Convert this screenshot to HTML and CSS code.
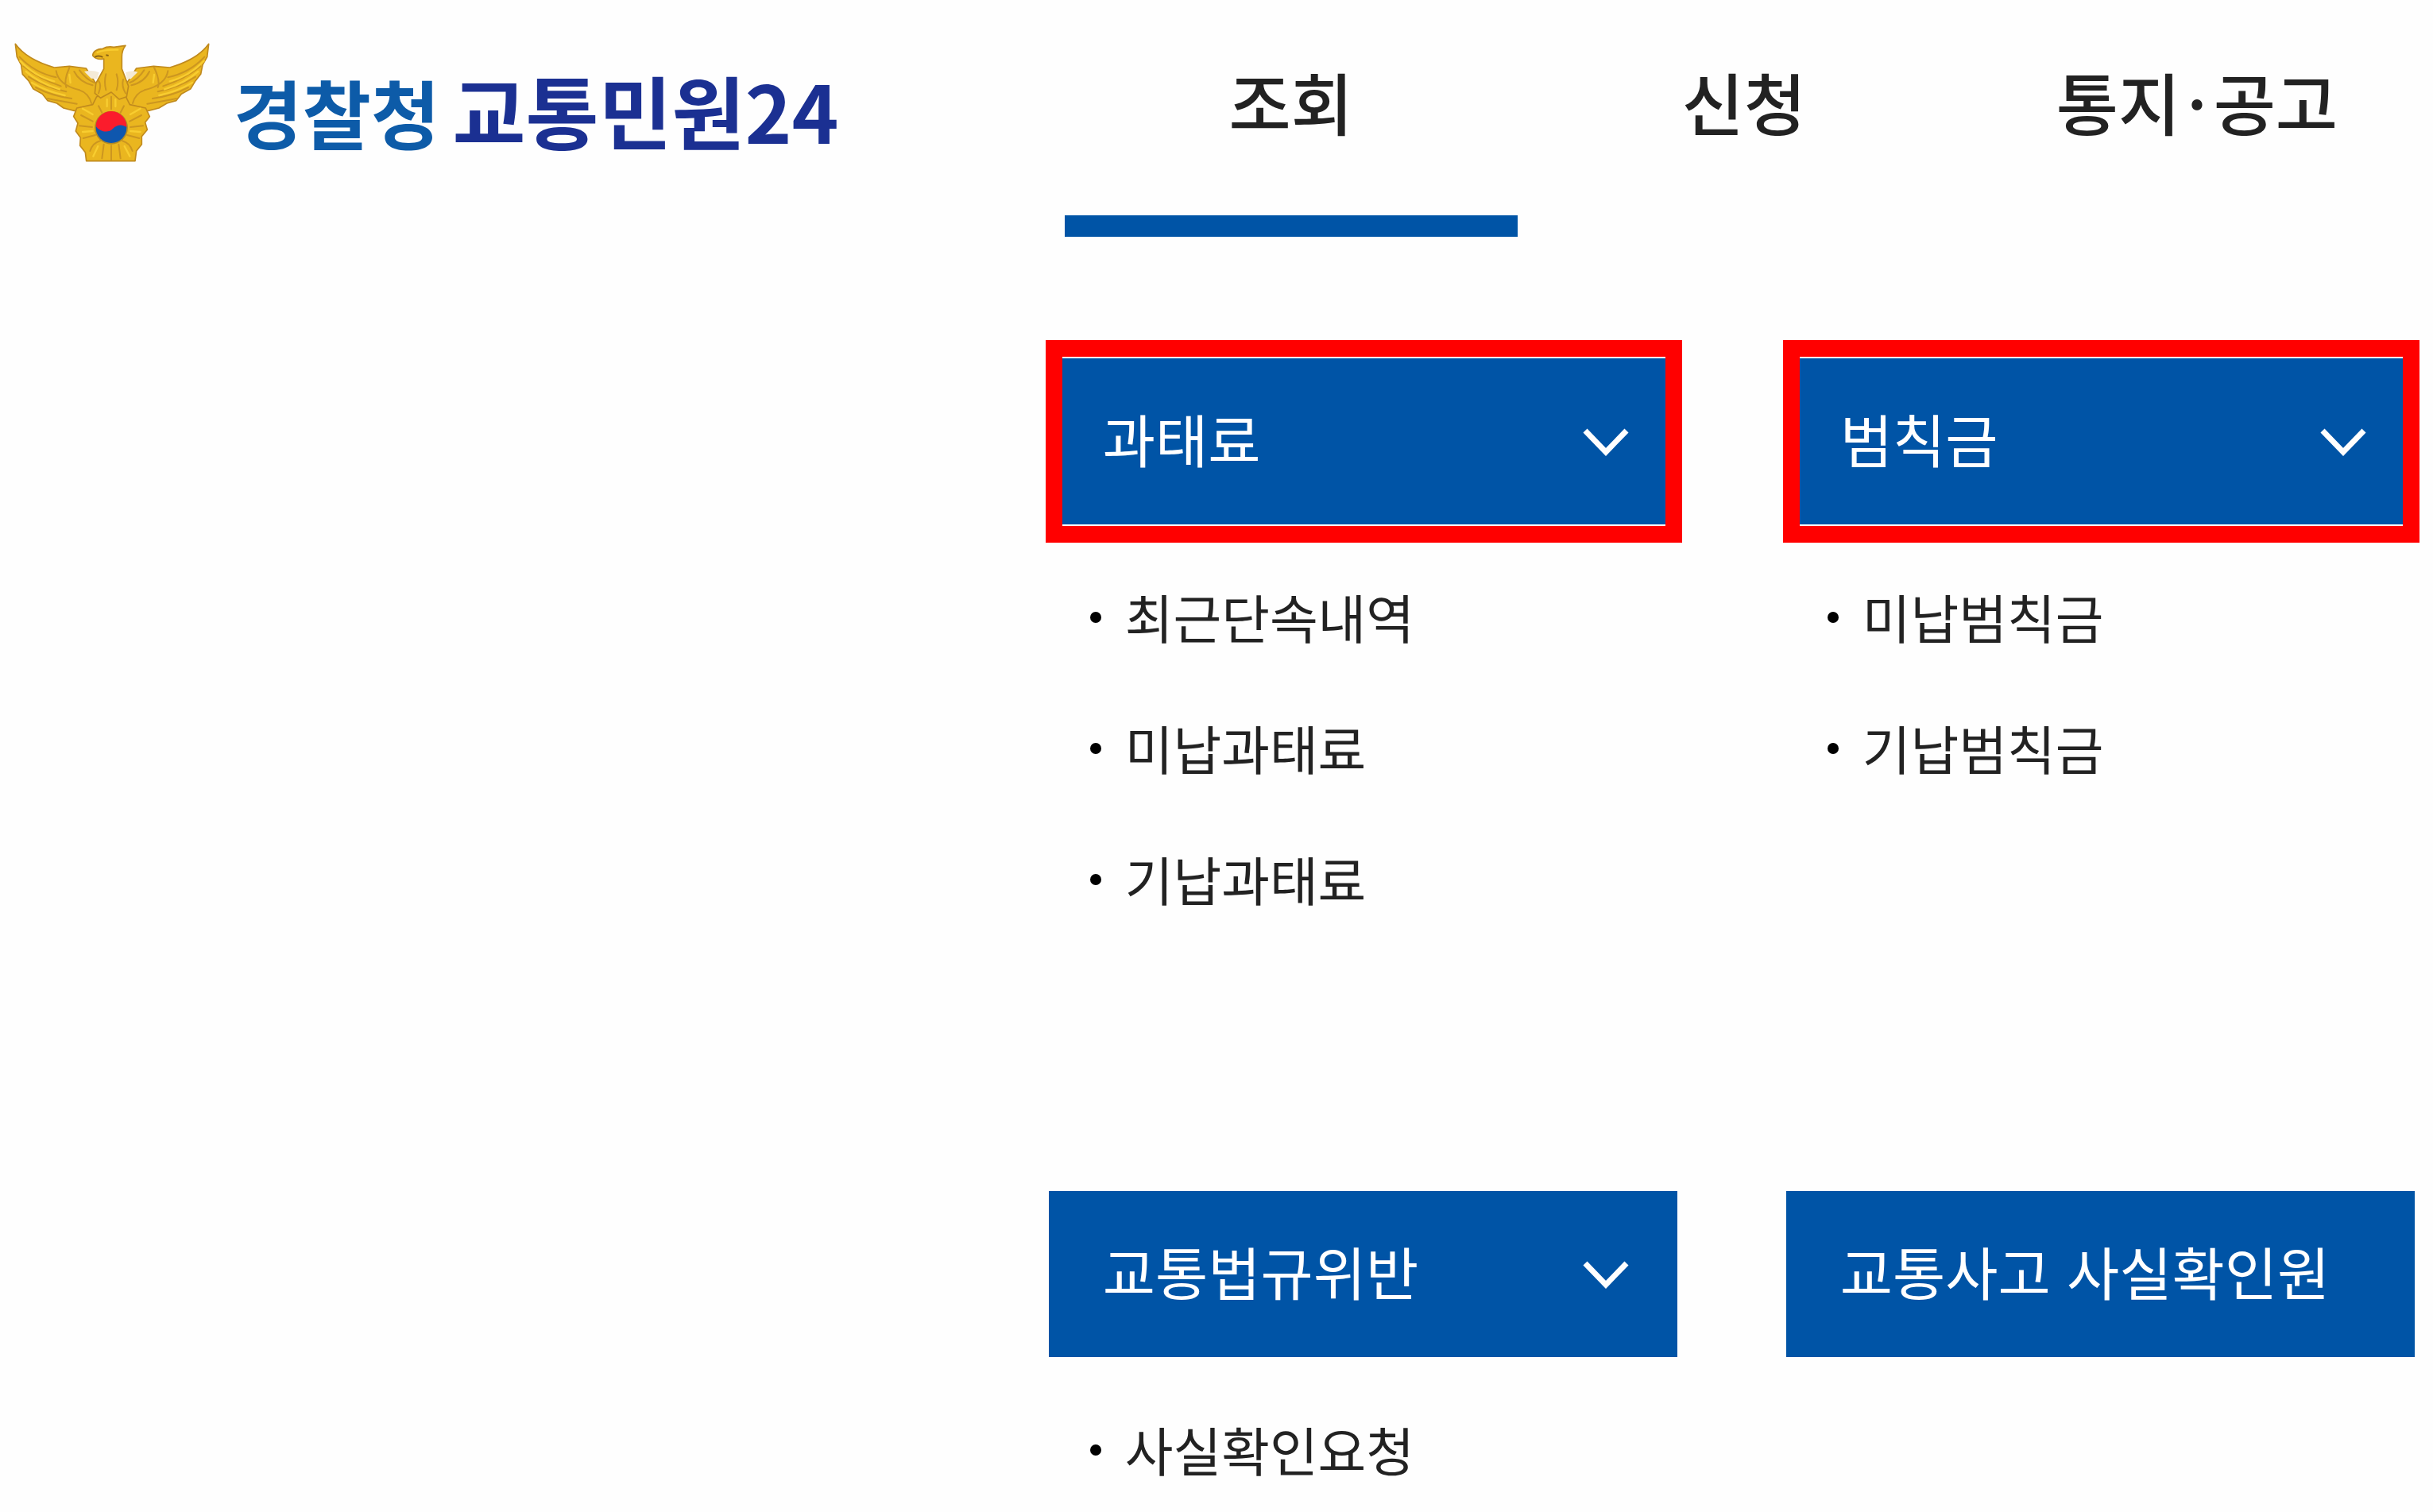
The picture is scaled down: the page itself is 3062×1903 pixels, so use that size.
FILE: index.html
```html
<!DOCTYPE html>
<html lang="ko">
<head>
  <meta charset="UTF-8">
  <meta name="viewport" content="width=device-width, initial-scale=1.0">
  <title>경찰청 교통민원24</title>
  <link rel="stylesheet" href="styles.css">
</head>
<body>

  <header class="header">
    <a class="logo" href="#">
      <!-- Police eagle emblem -->
      <svg class="emblem" viewBox="54 72 738 450" aria-hidden="true">
        <g fill="#eab61f" stroke="#c08a1e" stroke-width="5" stroke-linejoin="round">
          <path d="M58 76 Q100 135 205 165 L262 160 L325 168 L385 260 L350 325 L280 328 L240 318 L215 300 L180 290 L160 265 L125 245 L108 215 L85 190 L80 155 L64 125 Z"/>
          <path d="M788 76 Q746 135 641 165 L580 160 L515 168 L455 260 L490 325 L560 328 L600 318 L630 300 L665 290 L685 265 L720 245 L738 215 L758 190 L765 155 L782 125 Z"/>
          <path d="M290 318 L350 305 L365 275 L420 255 L475 275 L490 305 L550 318 L565 350 L548 372 L556 400 L535 425 L535 455 L515 480 L510 518 L326 518 L322 485 L302 460 L304 430 L286 405 L294 375 L278 350 Z"/>
          <path d="M392 170 L392 132 Q365 138 350 120 Q352 96 388 94 Q405 84 430 88 L474 82 Q460 100 460 125 L460 170 L485 235 L478 275 L450 285 L420 258 L380 280 L358 262 L362 225 Z"/>
        </g>
        <path d="M318 180 Q350 172 374 184 L366 208 L344 206 Z M474 184 Q495 174 520 182 L494 208 L480 208 Z" fill="#f4ead6"/>
        <!-- Feathers -->
        <g fill="none" stroke="#cc9620" stroke-width="6" stroke-linecap="round">
          <path d="M74 125 Q130 185 212 202 M88 160 Q150 210 230 235 M108 200 Q170 240 250 256 M135 240 Q190 270 270 282 M180 282 Q220 290 290 302 M212 178 Q220 230 300 250 M262 165 Q240 215 250 240 M280 180 Q300 220 350 232 M300 175 Q325 210 356 222 M300 250 Q335 262 345 300"/>
          <path d="M772 125 Q716 185 634 202 M758 160 Q696 210 616 235 M738 200 Q676 240 596 256 M711 240 Q656 270 576 282 M666 282 Q626 290 556 302 M634 178 Q626 230 546 250 M582 165 Q606 215 596 240 M564 180 Q546 220 496 232 M544 175 Q521 210 490 222 M546 250 Q511 262 501 300"/>
          <path d="M372 215 Q385 230 372 262 M400 190 Q392 220 400 250 M440 190 Q450 220 440 250 M465 210 Q458 235 474 262"/>
          <path d="M306 345 L350 368 M300 385 L348 390 M314 432 L360 420 M340 480 Q350 450 378 442 M385 508 L392 455 M420 514 L420 460 M455 508 L448 455 M500 480 Q490 450 462 442 M526 432 L480 420 M540 385 L492 390 M534 345 L490 368 M372 310 L385 335 M420 275 L420 322 M468 310 L455 335"/>
        </g>
        <g fill="none" stroke="#f8cd30" stroke-width="7" stroke-linecap="round">
          <path d="M76 140 Q130 198 205 217 M98 180 Q150 225 225 247 M120 222 Q175 255 245 270 M262 192 L266 222 M312 320 L350 342 M312 408 L350 405 M352 500 L370 462 M404 285 L404 312"/>
          <path d="M770 140 Q716 198 641 217 M748 180 Q696 225 621 247 M726 222 Q671 255 601 270 M582 192 L578 222 M530 320 L492 342 M530 408 L492 405 M490 500 L470 462 M436 285 L436 312"/>
          <path d="M368 108 Q395 96 445 98"/>
        </g>
        <path d="M358 125 Q375 118 388 126 M400 118 L410 120" fill="none" stroke="#8d6414" stroke-width="6"/>
        <!-- Taegeuk -->
        <circle cx="420" cy="392" r="63" fill="#b48b24"/>
        <circle cx="420" cy="392" r="58" fill="#0f57ae"/>
        <path d="M362 386 A58 58 0 0 1 478 390 C462 378 440 380 426 396 C410 414 376 408 362 386 Z" fill="#fb1c2c"/>
      </svg>
      <span class="logo-text">
        <span class="logo-police">경찰청</span>
        <span class="logo-service">교통민원24</span>
      </span>
    </a>

    <nav class="tabs">
      <a class="tab active" href="#">조회</a>
      <a class="tab" href="#">신청</a>
      <a class="tab" href="#">통지<span class="dot">·</span>공고</a>
    </nav>
  </header>

  <main class="menu">
    <section class="group">
      <button class="group-btn marked" type="button">
        과태료
        <svg class="chevron" viewBox="0 0 58 36" aria-hidden="true"><path d="M3 4 L29 31 L55 4"/></svg>
      </button>
      <ul class="links">
        <li><a href="#">최근단속내역</a></li>
        <li><a href="#">미납과태료</a></li>
        <li><a href="#">기납과태료</a></li>
      </ul>
    </section>

    <section class="group">
      <button class="group-btn marked" type="button">
        범칙금
        <svg class="chevron" viewBox="0 0 58 36" aria-hidden="true"><path d="M3 4 L29 31 L55 4"/></svg>
      </button>
      <ul class="links">
        <li><a href="#">미납범칙금</a></li>
        <li><a href="#">기납범칙금</a></li>
      </ul>
    </section>

    <section class="group">
      <button class="group-btn" type="button">
        교통법규위반
        <svg class="chevron" viewBox="0 0 58 36" aria-hidden="true"><path d="M3 4 L29 31 L55 4"/></svg>
      </button>
      <ul class="links">
        <li><a href="#">사실확인요청</a></li>
      </ul>
    </section>

    <section class="group">
      <button class="group-btn" type="button">교통사고 사실확인원</button>
    </section>
  </main>

</body>
</html>
```
FILE: styles.css
```css
* {
  box-sizing: border-box;
}

body {
  margin: 0;
  background: #fefefe;
  color: #222;
  font-family: "Noto Sans CJK KR", "Noto Sans", sans-serif;
}

a {
  color: inherit;
  text-decoration: none;
}

/* Header */
.header {
  display: grid;
  grid-template-columns: 7fr 9fr;
  align-items: start;
}

.logo {
  display: flex;
  align-items: flex-start;
  gap: 30px;
  padding: 54px 0 0 18px;
}

.emblem {
  width: 246px;
  height: 150px;
  flex: none;
}

.logo-text {
  display: flex;
  align-items: baseline;
  gap: 16px;
  padding-top: 12px;
  font-weight: 700;
  line-height: 144px;
  white-space: nowrap;
}

.logo-police {
  font-size: 94px;
  color: #0d5ba8;
}

.logo-service {
  font-size: 100px;
  color: #1b3092;
}

.tabs {
  display: grid;
  grid-template-columns: repeat(3, 1fr);
  padding-right: 12px;
}

.tab {
  height: 298px;
  padding-top: 63px;
  border-bottom: 27px solid transparent;
  font-size: 85px;
  font-weight: 500;
  line-height: 128px;
  text-align: center;
}

.tab.active {
  border-color: #0054a6;
}

.tab .dot {
  margin: 0 8px;
}

/* Menu groups */
.menu {
  display: grid;
  grid-template-columns: 1fr 1fr;
  grid-template-rows: minmax(1048px, auto) auto;
  column-gap: 137px;
  margin-left: 43.1%;
  padding: 153px 23px 0 0;
}

.group-btn {
  position: relative;
  display: flex;
  align-items: center;
  justify-content: space-between;
  width: 100%;
  height: 209px;
  padding: 0 61px 10px 68px;
  border: none;
  background: #0054a6;
  color: #fff;
  font-family: inherit;
  font-size: 72px;
  font-weight: 400;
  cursor: pointer;
}

/* Red box around the highlighted groups */
.group-btn.marked::after {
  content: "";
  position: absolute;
  top: -23px;
  right: -6px;
  bottom: -23px;
  left: -4px;
  border: 21px solid #f00;
  box-shadow: inset 0 2px #fff, inset 0 -2px #fff;
}

.chevron {
  width: 58px;
  height: 36px;
  margin-top: 10px;
  fill: none;
  stroke: #fff;
  stroke-width: 7;
}

.links {
  list-style: none;
  margin: 0;
  padding: 34px 0 0 52px;
}

.links li {
  display: flex;
  align-items: center;
  gap: 30px;
  height: 165px;
  font-size: 66px;
  font-weight: 400;
}

.links li::before {
  content: "";
  width: 14px;
  height: 14px;
  border-radius: 50%;
  background: #000;
}

.links a {
  padding-bottom: 4px;
}
```
